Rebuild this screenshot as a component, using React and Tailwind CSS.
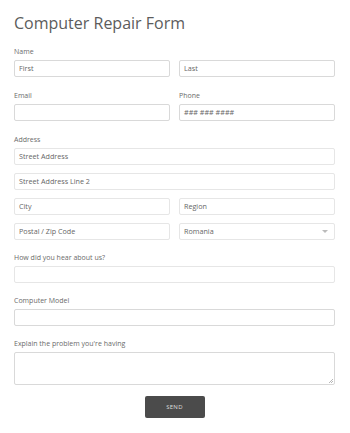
import React from 'react';

const font = { fontFamily: '"Open Sans", "Liberation Sans", sans-serif' };

const Label = ({ children, className = '' }) => (
  <div className={`text-[7px] leading-[9px] text-[#6b6b6b] mb-[4px] ${className}`}>{children}</div>
);

const Input = ({ placeholder = '', light = false }) => (
  <div
    className={`h-[17px] rounded-[2px] border bg-white px-[4px] flex items-center text-[7.2px] text-[#666] ${
      light ? 'border-[#e6e6e6]' : 'border-[#d9d9d9]'
    }`}
  >
    {placeholder}
  </div>
);

const App = () => {
  return (
    <div className="w-[350px] h-[433px] bg-white px-[14px] pr-[15px] pt-[13px]" style={font}>
      <h1 className="text-[16px] leading-[20px] text-[#5c5c5c] font-normal mb-[14px]">Computer Repair Form</h1>

      <div className="grid grid-cols-2 gap-x-[9px]">
        <div>
          <Label>Name</Label>
          <Input placeholder="First" />
        </div>
        <div>
          <Label>&nbsp;</Label>
          <Input placeholder="Last" />
        </div>
      </div>

      <div className="grid grid-cols-2 gap-x-[9px] mt-[14px]">
        <div>
          <Label className="mb-[3px]">Email</Label>
          <Input />
        </div>
        <div>
          <Label className="mb-[3px]">Phone</Label>
          <Input placeholder="### ### ####" />
        </div>
      </div>

      <div className="mt-[14px]">
        <Label className="mb-[3px]">Address</Label>
        <div className="flex flex-col gap-[8px]">
          <Input light placeholder="Street Address" />
          <Input light placeholder="Street Address Line 2" />
          <div className="grid grid-cols-2 gap-x-[9px]">
            <Input light placeholder="City" />
            <Input light placeholder="Region" />
          </div>
          <div className="grid grid-cols-2 gap-x-[9px]">
            <Input light placeholder="Postal / Zip Code" />
            <div className="h-[17px] rounded-[2px] border border-[#e6e6e6] bg-white px-[4px] flex items-center justify-between text-[7.2px] text-[#666]">
              <span>Romania</span>
              <svg width="6" height="4" viewBox="0 0 6 4" className="mr-[2px]">
                <path d="M0 0 L6 0 L3 3 Z" fill="#bbb" />
              </svg>
            </div>
          </div>
        </div>
      </div>

      <div className="mt-[13px]">
        <Label className="mb-[4px]">How did you hear about us?</Label>
        <Input light />
      </div>

      <div className="mt-[13px]">
        <Label className="mb-[4px]">Computer Model</Label>
        <Input />
      </div>

      <div className="mt-[13px]">
        <Label className="mb-[3px]">Explain the problem you're having</Label>
        <div className="relative h-[33px] rounded-[2px] border border-[#d9d9d9] bg-white">
          <svg width="5" height="5" viewBox="0 0 5 5" className="absolute right-[1px] bottom-[1px]">
            <path d="M5 1 L1 5 M5 3 L3 5" stroke="#999" strokeWidth="0.7" />
          </svg>
        </div>
      </div>

      <div className="flex justify-center mt-[11px]">
        <button className="w-[60px] h-[22px] bg-[#4b4b4b] rounded-[2px] text-[6px] text-[#ddd] tracking-[0.3px]">
          SEND
        </button>
      </div>
    </div>
  );
};

export default App;
